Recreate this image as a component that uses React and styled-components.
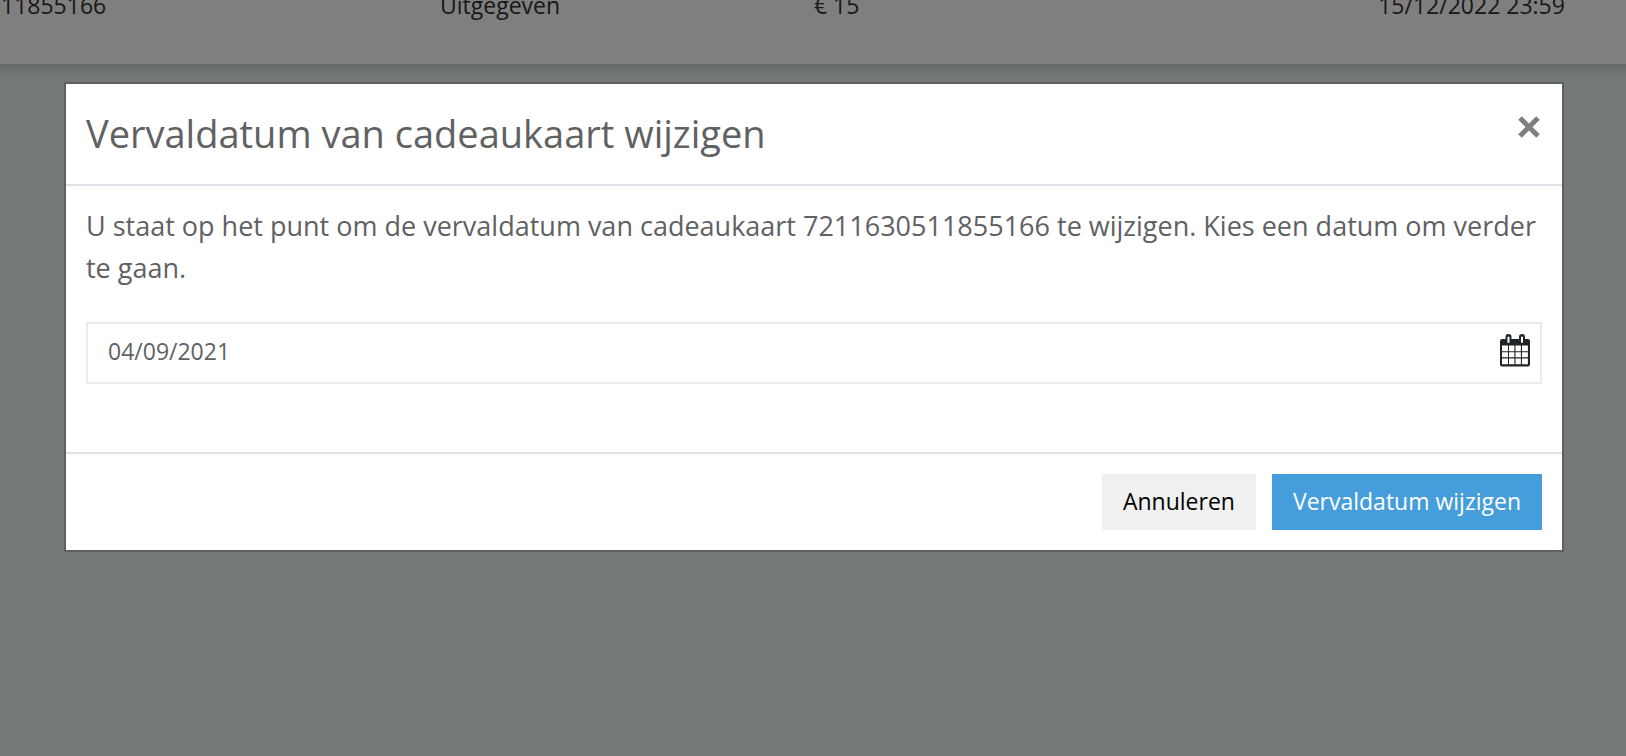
import React, { useState } from "react";
import styled, { createGlobalStyle } from "styled-components";

const GlobalStyle = createGlobalStyle`
  * {
    box-sizing: border-box;
  }
  body {
    margin: 0;
    background: #ebf2f4;
    color: #5f6163;
    font-family: "Open Sans", "Noto Sans", sans-serif;
  }
`;

const Page = styled.div`
  min-height: 100vh;
`;

const Panel = styled.section`
  height: 64px;
  display: flex;
  align-items: flex-end;
  overflow: hidden;
  background: #fff;
`;

const PanelShadow = styled.div`
  box-shadow: 0 -14px 14px 17px rgba(0, 0, 0, 0.2);
`;

const Table = styled.table`
  width: 100%;
  table-layout: fixed;
  border-collapse: collapse;
`;

const Cell = styled.td`
  width: ${({ $width }) => $width};
  padding: 0 0 44px 1px;
  font-size: 23px;
  line-height: 30px;
  color: #313131;
  white-space: nowrap;
`;

const Overlay = styled.div`
  position: fixed;
  inset: 0;
  padding: 82px 62px 40px 64px;
  overflow: auto;
  background: rgba(0, 0, 0, 0.5);
`;

const Dialog = styled.div`
  border: 2px solid rgba(0, 0, 0, 0.2);
  background: #fff;
  background-clip: padding-box;
`;

const Header = styled.div`
  display: flex;
  align-items: flex-start;
  justify-content: space-between;
  padding: 19px 20px 21px;
  border-bottom: 2px solid #dee2e6;
`;

const Title = styled.h1`
  margin: 0;
  font-size: 38px;
  line-height: 60px;
  font-weight: 400;
`;

const IconButton = styled.button`
  display: flex;
  flex-shrink: 0;
  padding: ${({ $padding }) => $padding};
  border: 0;
  background: none;
  color: ${({ $color }) => $color};
  cursor: pointer;
`;

const Body = styled.div`
  padding: 19px 20px 68px;
`;

const Message = styled.p`
  margin: 0 0 33px;
  font-size: 27px;
  line-height: 42px;
`;

const Field = styled.div`
  display: flex;
  align-items: center;
  height: 62px;
  padding-bottom: 4px;
  border: 2px solid #ebebeb;
`;

const DateInput = styled.input`
  flex: 1;
  min-width: 0;
  height: 100%;
  padding: 0 20px;
  border: 0;
  outline: 0;
  background: none;
  color: inherit;
  font-family: inherit;
  font-size: 23px;
`;

const Footer = styled.div`
  display: flex;
  justify-content: flex-end;
  gap: 16px;
  padding: 20px;
  border-top: 2px solid #dee2e6;
`;

const Button = styled.button`
  height: 56px;
  padding: 0 21px 2px;
  border: 0;
  background: ${({ $primary }) => ($primary ? "#459ddb" : "#f0f0f0")};
  color: ${({ $primary }) => ($primary ? "#fff" : "#000")};
  font-family: inherit;
  font-size: 23px;
  cursor: pointer;
`;

const CloseIcon = () => (
  <svg width="24" height="24" viewBox="0 0 24 24" fill="none" aria-hidden="true">
    <path d="M3 3L21 21M21 3L3 21" stroke="currentColor" strokeWidth="5" />
  </svg>
);

const CalendarIcon = () => (
  <svg width="30" height="34" viewBox="0 0 30 34" aria-hidden="true">
    <path
      fill="currentColor"
      fillRule="evenodd"
      d="M2 5H5.5V3a3 3 0 0 1 6 0V5H19V3a3 3 0 0 1 6 0V5H28a2 2 0 0 1 2 2V30.400a2 2 0 0 1-2 2H2a2 2 0 0 1-2-2V7a2 2 0 0 1 2-2ZM7.500 2.700V8.700H9.500V2.700ZM21 2.700V8.700H23V2.700ZM2 11.500V17.200H8V11.500ZM9 11.500V17.200H14.400V11.500ZM15.500 11.500V17.200H20.900V11.500ZM22 11.500V17.200H27.900V11.500ZM2 18.300V23.300H8V18.300ZM9 18.300V23.300H14.400V18.300ZM15.500 18.300V23.300H20.900V18.300ZM22 18.300V23.300H27.900V18.300ZM2 24.400V30.200H8V24.400ZM9 24.400V30.200H14.400V24.400ZM15.500 24.400V30.200H20.900V24.400ZM22 24.400V30.200H27.900V24.400Z"
    />
  </svg>
);

const App = () => {
  const [date, setDate] = useState("04/09/2021");

  return (
    <Page>
      <GlobalStyle />
      <PanelShadow>
        <Panel>
          <Table>
            <tbody>
              <tr>
                <Cell $width="27%">11855166</Cell>
                <Cell $width="23%">Uitgegeven</Cell>
                <Cell $width="34.7%">€ 15</Cell>
                <Cell>15/12/2022 23:59</Cell>
              </tr>
            </tbody>
          </Table>
        </Panel>
      </PanelShadow>
      <Overlay>
        <Dialog role="dialog" aria-modal="true" aria-labelledby="dialog-title">
          <Header>
            <Title id="dialog-title">Vervaldatum van cadeaukaart wijzigen</Title>
            <IconButton $color="#7f7f7f" $padding="12px 1px" aria-label="Sluiten">
              <CloseIcon />
            </IconButton>
          </Header>
          <Body>
            <Message id="dialog-message">
              U staat op het punt om de vervaldatum van cadeaukaart
              7211630511855166 te wijzigen. Kies een datum om verder te gaan.
            </Message>
            <Field>
              <DateInput
                type="text"
                aria-label="Vervaldatum"
                value={date}
                onChange={(e) => setDate(e.target.value)}
              />
              <IconButton $color="#212529" $padding="0 10px" aria-label="Kies een datum">
                <CalendarIcon />
              </IconButton>
            </Field>
          </Body>
          <Footer>
            <Button>Annuleren</Button>
            <Button $primary>Vervaldatum wijzigen</Button>
          </Footer>
        </Dialog>
      </Overlay>
    </Page>
  );
};

export default App;
